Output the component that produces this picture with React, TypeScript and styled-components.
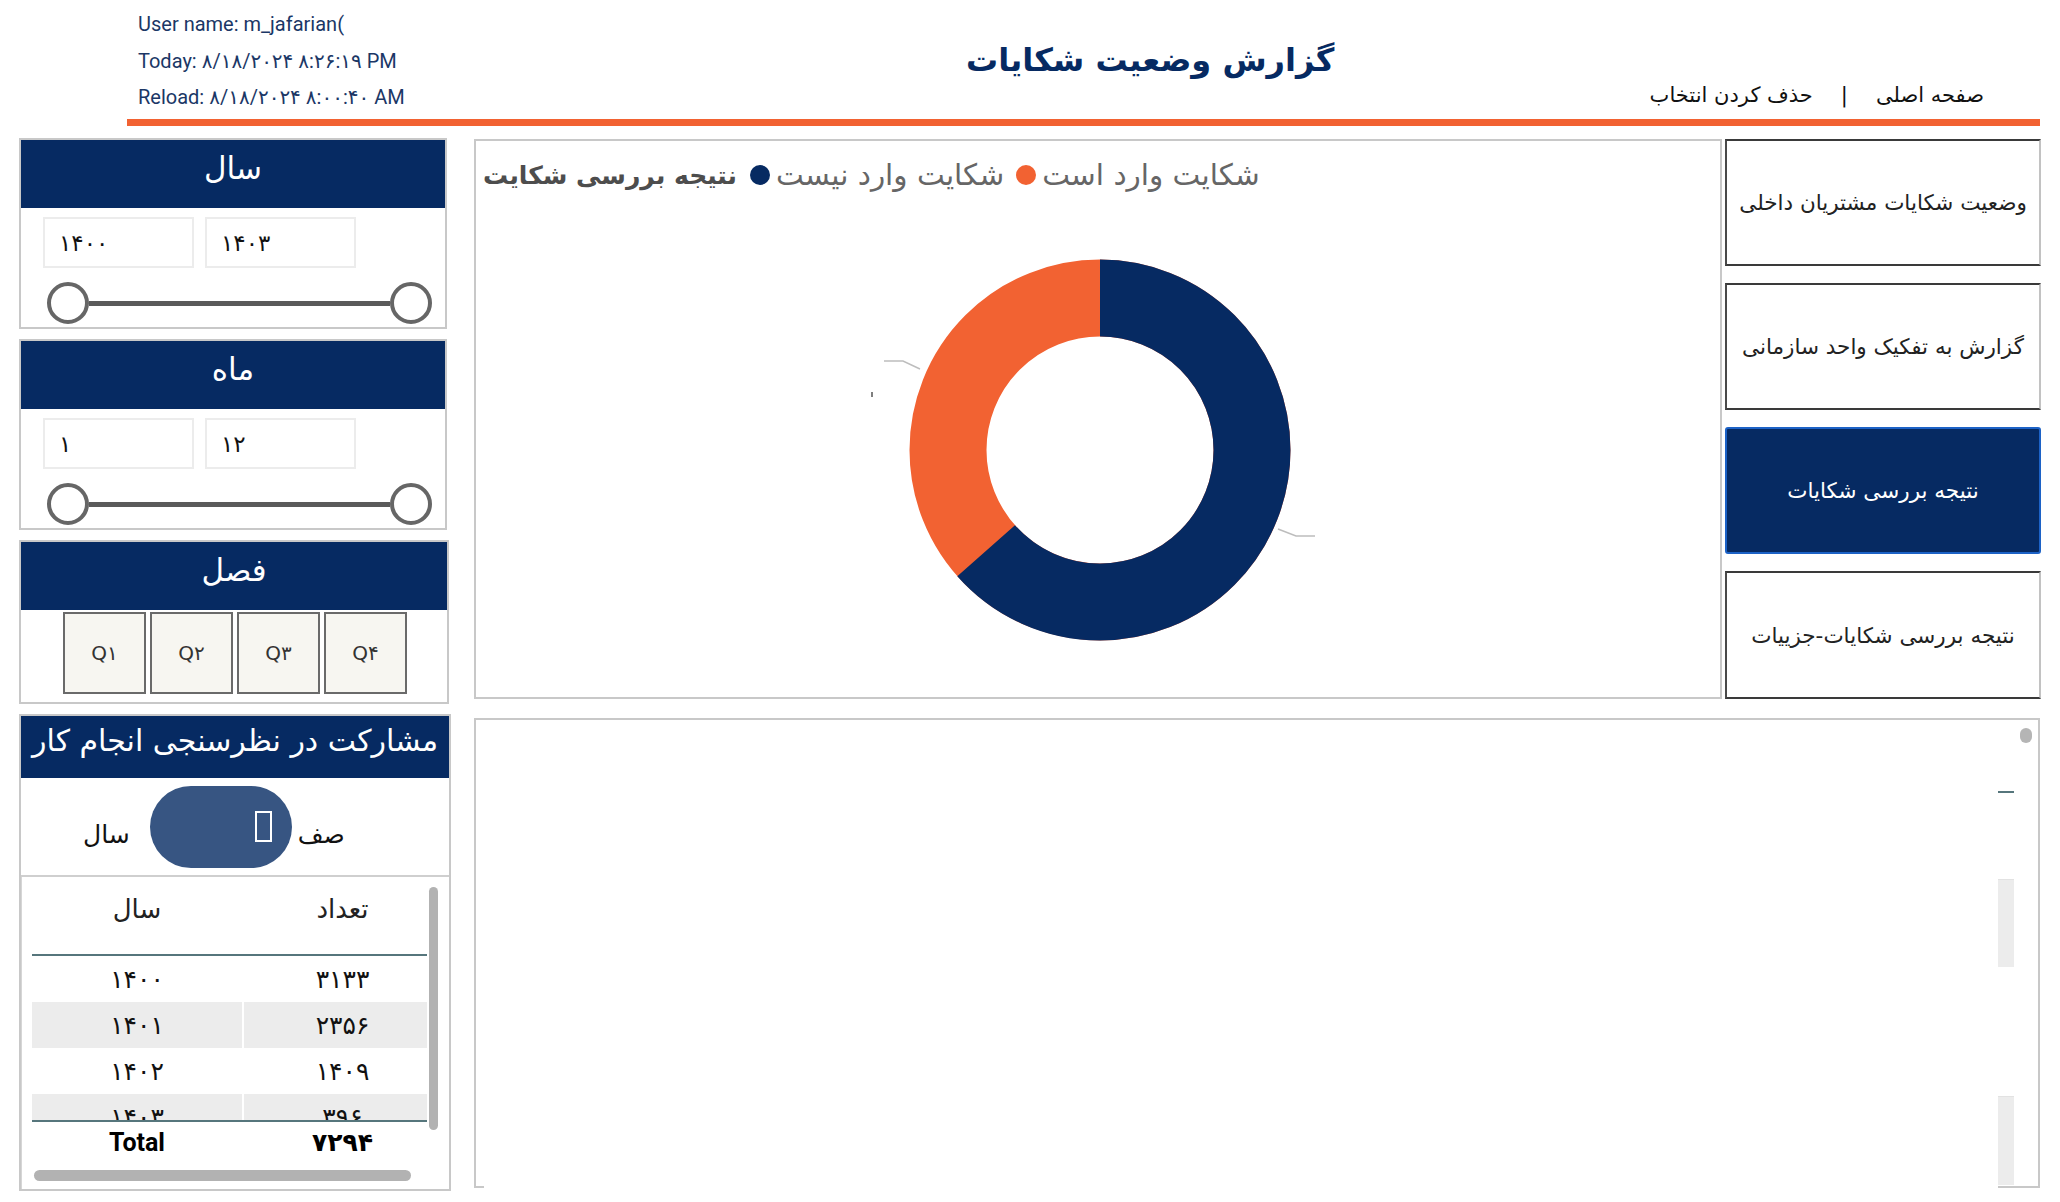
import styled, { createGlobalStyle } from "styled-components";

const NAVY = "#062a62";
const ORANGE = "#f26232";
const FA = `"DejaVu Sans", "Noto Sans", sans-serif`;

const GlobalStyle = createGlobalStyle`
  html, body {
    margin: 0;
    padding: 0;
    background: #fff;
  }

  body {
    font-family: ${FA};
  }

  * {
    box-sizing: border-box;
  }
`;

const Page = styled.div`
  width: 2060px;
  height: 1202px;
  overflow: hidden;
`;

const Header = styled.header`
  display: flex;
  align-items: flex-start;
  height: 119px;
  padding: 6px 76px 0 138px;
`;

const Info = styled.div`
  width: 828px;
  font-family: Roboto, ${FA};
  font-size: 20px;
  line-height: 36.5px;
  color: #1b3766;
`;

const Title = styled.h1`
  margin: 29px 0 0;
  font-size: 32px;
  line-height: 50px;
  font-weight: bold;
  color: ${NAVY};
`;

const Links = styled.div`
  display: flex;
  direction: rtl;
  gap: 28px;
  margin: 74px 0 0 auto;
  font-size: 21px;
  line-height: 30px;
  color: #111;
`;

const Rule = styled.div`
  margin-left: 127px;
  width: 1913px;
  height: 7px;
  background: ${ORANGE};
`;

const Main = styled.main`
  display: flex;
  gap: 23px;
  margin-top: 12px;
  padding-left: 19px;
`;

const LeftColumn = styled.div`
  display: flex;
  flex-direction: column;
  gap: 10px;
`;

const Panel = styled.section<{ $w: number; $h: number }>`
  display: flex;
  flex-direction: column;
  width: ${(p) => p.$w}px;
  height: ${(p) => p.$h}px;
  border: 2px solid #c8c8c8;
  background: #fff;
`;

const PanelHeader = styled.div<{ $h?: number; $size?: number }>`
  display: flex;
  align-items: center;
  justify-content: center;
  height: ${(p) => p.$h ?? 68}px;
  flex-shrink: 0;
  padding-bottom: 13px;
  background: ${NAVY};
  color: #fff;
  font-size: ${(p) => p.$size ?? 31}px;
  white-space: nowrap;
`;

const InputRow = styled.div`
  display: flex;
  gap: 11px;
  margin-top: 9px;
  padding-left: 22px;
`;

const ValueBox = styled.div`
  display: flex;
  align-items: center;
  width: 151px;
  height: 51px;
  padding-left: 14px;
  border: 2px solid #ececec;
  font-size: 23px;
  color: #111;
`;

const SliderRow = styled.div`
  display: flex;
  align-items: center;
  width: 385px;
  margin: 14px 0 0 26px;
`;

const Thumb = styled.div`
  width: 42px;
  height: 42px;
  flex-shrink: 0;
  border: 4px solid #666;
  border-radius: 50%;
  background: #fff;
`;

const Track = styled.div`
  flex: 1;
  height: 5px;
  background: #5a5a5a;
`;

const QuarterRow = styled.div`
  display: flex;
  gap: 4px;
  margin-top: 2px;
  padding-left: 42px;
`;

const Quarter = styled.div`
  display: flex;
  align-items: center;
  justify-content: center;
  width: 83px;
  height: 82px;
  border: 2px solid #6a6a6a;
  background: #f7f6f1;
  font-size: 20px;
  color: #333;
`;

const ToggleRow = styled.div`
  display: flex;
  align-items: center;
  height: 99px;
  padding-left: 62px;
  border-bottom: 2px solid #cfcfcf;
`;

const ToggleLabel = styled.span`
  margin-top: 16px;
  font-size: 25px;
  color: #111;
`;

const Pill = styled.div`
  display: flex;
  align-items: center;
  justify-content: flex-end;
  width: 142px;
  height: 82px;
  margin: 0 6px 0 20px;
  padding-right: 20px;
  border-radius: 41px;
  background: #375582;
`;

const Tofu = styled.span`
  width: 17px;
  height: 31px;
  border: 2px solid #fff;
`;

const TableSection = styled.div`
  display: flex;
  flex-direction: column;
  flex: 1;
  border-left: 1px solid #d6d6d6;
`;

const TableWrap = styled.div`
  display: flex;
  padding-left: 10px;
`;

const TableBody = styled.div`
  width: 395px;
`;

const Cells = styled.div<{ $grey?: boolean; $h?: number }>`
  display: grid;
  grid-template-columns: 210px 183px;
  column-gap: 2px;
  height: ${(p) => p.$h ?? 46}px;

  & > div {
    display: flex;
    align-items: center;
    justify-content: center;
    background: ${(p) => (p.$grey ? "#ececec" : "#fff")};
  }

  & > div + div {
    padding-left: 14px;
  }
`;

const HeadRow = styled(Cells)`
  border-bottom: 2px solid #56767c;

  & > div {
    align-items: flex-start;
    padding-top: 14px;
    font-size: 26px;
    line-height: 36px;
    color: #222;
  }
`;

const Rows = styled.div`
  height: 164px;
  overflow: hidden;
  font-size: 25px;
  color: #111;
`;

const TotalRow = styled(Cells)`
  border-top: 2px solid #56767c;
  padding-top: 3px;
  font-size: 25px;
  font-weight: bold;
  color: #000;
`;

const TotalWord = styled.span`
  font-family: Roboto, ${FA};
`;

const VScroll = styled.div`
  width: 9px;
  height: 243px;
  margin: 10px 0 0 2px;
  border-radius: 5px;
  background: #b2b2b2;
`;

const HScroll = styled.div`
  width: 377px;
  height: 11px;
  margin: 10px 0 0 12px;
  border-radius: 6px;
  background: #b2b2b2;
`;

const RightArea = styled.div`
  display: flex;
  flex-direction: column;
  gap: 19px;
  padding-top: 1px;
`;

const TopRow = styled.div`
  display: flex;
  gap: 3px;
  height: 560px;
`;

const ChartPanel = styled.section`
  display: flex;
  flex-direction: column;
  width: 1248px;
  border: 2px solid #c8c8c8;
`;

const Legend = styled.div`
  display: flex;
  align-items: center;
  height: 72px;
  padding-left: 7px;
  font-size: 29.5px;
  color: #666;
  white-space: nowrap;
`;

const LegendTitle = styled.span`
  margin-right: 13px;
  font-size: 25px;
  font-weight: bold;
  color: #4d4d4d;
`;

const Dot = styled.span<{ $c: string }>`
  width: 20px;
  height: 20px;
  margin-right: 6px;
  border-radius: 50%;
  background: ${(p) => p.$c};
`;

const LegendItem = styled.span`
  margin-right: 12px;
`;

const ChartArea = styled.div`
  flex: 1;
`;

const NavColumn = styled.nav`
  display: flex;
  flex-direction: column;
  gap: 17px;
  width: 316px;
`;

const NavButton = styled.div<{ $active?: boolean; $grow?: boolean }>`
  display: flex;
  align-items: center;
  justify-content: center;
  height: 127px;
  flex: ${(p) => (p.$grow ? 1 : "none")};
  direction: rtl;
  font-size: 21.5px;
  white-space: nowrap;
  color: ${(p) => (p.$active ? "#fff" : "#222")};
  background: ${(p) => (p.$active ? NAVY : "#fff")};
  border-top: 2px solid ${(p) => (p.$active ? "#1c62c6" : "#3a3a3a")};
  border-bottom: 2px solid ${(p) => (p.$active ? "#1c62c6" : "#3a3a3a")};
  border-left: 2px solid ${(p) => (p.$active ? "#1c62c6" : "#4a4a4a")};
  border-right: 2px solid ${(p) => (p.$active ? "#1c62c6" : "#c2c2c2")};
  border-radius: ${(p) => (p.$active ? "3px" : "0")};
`;

const BottomPanel = styled.section`
  display: flex;
  flex-direction: column;
  width: 1566px;
  height: 470px;
  border: 2px solid #c8c8c8;
  border-bottom: none;
`;

const BottomBody = styled.div`
  display: flex;
  flex: 1;
  padding-right: 6px;
`;

const Strip = styled.div`
  display: flex;
  flex-direction: column;
  width: 16px;
  margin-left: auto;
`;

const StripLine = styled.div`
  height: 2px;
  margin-top: 71px;
  background: #56767c;
`;

const StripBlock = styled.div<{ $top: number; $h: number }>`
  height: ${(p) => p.$h}px;
  margin-top: ${(p) => p.$top}px;
  border-top: 1px solid #e2e2e2;
  background: #ececec;
`;

const ScrollDot = styled.div`
  width: 12px;
  height: 15px;
  margin: 8px 0 0 6px;
  border-radius: 6px;
  background: #b5b5b5;
`;

const BottomFooter = styled.div`
  display: flex;
  justify-content: space-between;
  height: 2px;
`;

const Stub = styled.div<{ $w: number }>`
  width: ${(p) => p.$w}px;
  background: #c8c8c8;
`;

const RangePanel = ({ title, from, to }: { title: string; from: string; to: string }) => (
  <Panel $w={428} $h={191}>
    <PanelHeader>{title}</PanelHeader>
    <InputRow>
      <ValueBox>{from}</ValueBox>
      <ValueBox>{to}</ValueBox>
    </InputRow>
    <SliderRow>
      <Thumb />
      <Track />
      <Thumb />
    </SliderRow>
  </Panel>
);

const rows = [
  ["۱۴۰۰", "۳۱۳۳"],
  ["۱۴۰۱", "۲۳۵۶"],
  ["۱۴۰۲", "۱۴۰۹"],
  ["۱۴۰۳", "۳۹۶"],
];

const CX = 624;
const CY = 241;
const RING = 152;
const CIRC = 2 * Math.PI * RING;

const Donut = () => (
  <svg width="1244" height="484">
    <circle cx={CX} cy={CY} r={RING} fill="none" stroke={ORANGE} strokeWidth={77} />
    <circle
      cx={CX}
      cy={CY}
      r={RING}
      fill="none"
      stroke={NAVY}
      strokeWidth={77}
      strokeDasharray={`${CIRC * 0.6345} ${CIRC}`}
      transform={`rotate(-90 ${CX} ${CY})`}
    />
    <polyline points="408,152 427,152 444,160" fill="none" stroke="#bdbdbd" strokeWidth={1.5} />
    <line x1={396} y1={183} x2={396} y2={188} stroke="#555" strokeWidth={1.5} />
    <polyline points="802,320 820,327 839,327" fill="none" stroke="#bdbdbd" strokeWidth={1.5} />
  </svg>
);

const App = () => {
  return (
    <Page>
      <GlobalStyle />
      <Header>
        <Info>
          <div>User name: m_jafarian(</div>
          <div>Today: ۸/۱۸/۲۰۲۴ ۸:۲۶:۱۹ PM</div>
          <div>Reload: ۸/۱۸/۲۰۲۴ ۸:۰۰:۴۰ AM</div>
        </Info>
        <Title>گزارش وضعیت شکایات</Title>
        <Links>
          <span>صفحه اصلی</span>
          <span>|</span>
          <span>حذف کردن انتخاب</span>
        </Links>
      </Header>
      <Rule />
      <Main>
        <LeftColumn>
          <RangePanel title="سال" from="۱۴۰۰" to="۱۴۰۳" />
          <RangePanel title="ماه" from="۱" to="۱۲" />
          <Panel $w={430} $h={164}>
            <PanelHeader>فصل</PanelHeader>
            <QuarterRow>
              <Quarter>Q۱</Quarter>
              <Quarter>Q۲</Quarter>
              <Quarter>Q۳</Quarter>
              <Quarter>Q۴</Quarter>
            </QuarterRow>
          </Panel>
          <Panel $w={432} $h={477}>
            <PanelHeader $h={62} $size={30}>
              مشارکت در نظرسنجی انجام کار
            </PanelHeader>
            <ToggleRow>
              <ToggleLabel>سال</ToggleLabel>
              <Pill>
                <Tofu />
              </Pill>
              <ToggleLabel>صف</ToggleLabel>
            </ToggleRow>
            <TableSection>
              <TableWrap>
                <TableBody>
                  <HeadRow $h={79}>
                    <div>سال</div>
                    <div>تعداد</div>
                  </HeadRow>
                  <Rows>
                    {rows.map(([year, count], i) => (
                      <Cells key={year} $grey={i % 2 === 1}>
                        <div>{year}</div>
                        <div>{count}</div>
                      </Cells>
                    ))}
                  </Rows>
                  <TotalRow $h={40}>
                    <div>
                      <TotalWord>Total</TotalWord>
                    </div>
                    <div>۷۲۹۴</div>
                  </TotalRow>
                </TableBody>
                <VScroll />
              </TableWrap>
              <HScroll />
            </TableSection>
          </Panel>
        </LeftColumn>
        <RightArea>
          <TopRow>
            <ChartPanel>
              <Legend>
                <LegendTitle>نتیجه بررسی شکایت</LegendTitle>
                <Dot $c={NAVY} />
                <LegendItem>شکایت وارد نیست</LegendItem>
                <Dot $c={ORANGE} />
                <LegendItem>شکایت وارد است</LegendItem>
              </Legend>
              <ChartArea>
                <Donut />
              </ChartArea>
            </ChartPanel>
            <NavColumn>
              <NavButton>وضعیت شکایات مشتریان داخلی</NavButton>
              <NavButton>گزارش به تفکیک واحد سازمانی</NavButton>
              <NavButton $active>نتیجه بررسی شکایات</NavButton>
              <NavButton $grow>نتیجه بررسی شکایات-جزییات</NavButton>
            </NavColumn>
          </TopRow>
          <BottomPanel>
            <BottomBody>
              <Strip>
                <StripLine />
                <StripBlock $top={86} $h={88} />
                <StripBlock $top={129} $h={89} />
              </Strip>
              <ScrollDot />
            </BottomBody>
            <BottomFooter>
              <Stub $w={8} />
              <Stub $w={40} />
            </BottomFooter>
          </BottomPanel>
        </RightArea>
      </Main>
    </Page>
  );
};

export default App;
